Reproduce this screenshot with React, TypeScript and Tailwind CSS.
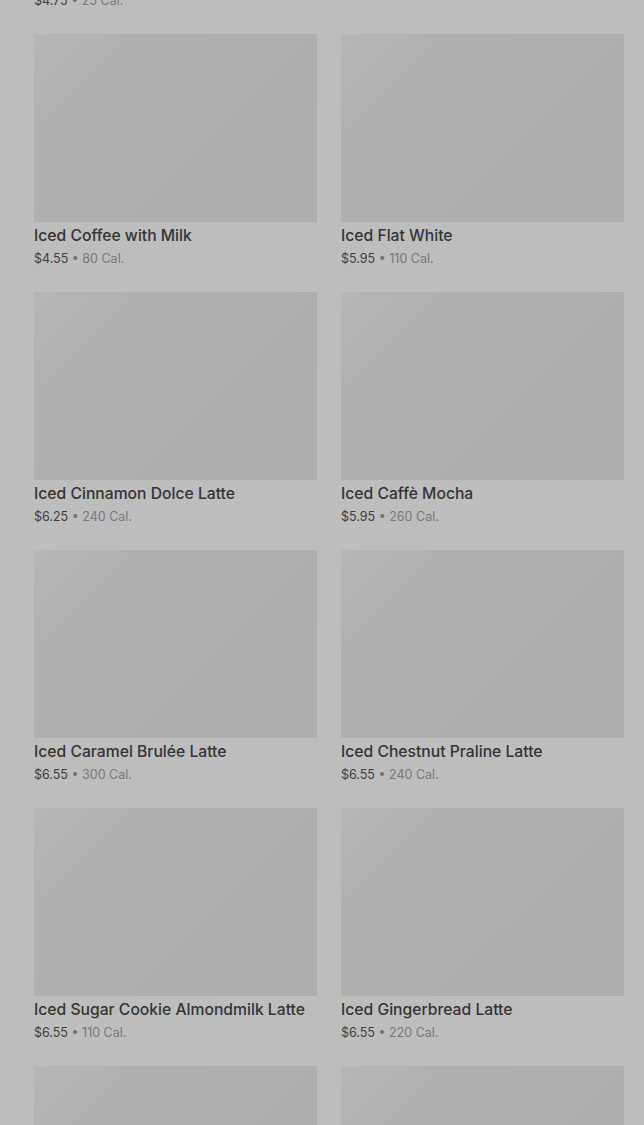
const items: { name: string; price: string; cal: string }[][] = [
  [
    { name: "Iced Coffee", price: "$4.75", cal: "25 Cal." },
    { name: "", price: "", cal: "" },
  ],
  [
    { name: "Iced Coffee with Milk", price: "$4.55", cal: "80 Cal." },
    { name: "Iced Flat White", price: "$5.95", cal: "110 Cal." },
  ],
  [
    { name: "Iced Cinnamon Dolce Latte", price: "$6.25", cal: "240 Cal." },
    { name: "Iced Caffè Mocha", price: "$5.95", cal: "260 Cal." },
  ],
  [
    { name: "Iced Caramel Brulée Latte", price: "$6.55", cal: "300 Cal." },
    { name: "Iced Chestnut Praline Latte", price: "$6.55", cal: "240 Cal." },
  ],
  [
    { name: "Iced Sugar Cookie Almondmilk Latte", price: "$6.55", cal: "110 Cal." },
    { name: "Iced Gingerbread Latte", price: "$6.55", cal: "220 Cal." },
  ],
  [
    { name: "Iced Pumpkin Spice Latte", price: "$6.55", cal: "310 Cal." },
    { name: "Iced White Chocolate Mocha", price: "$6.55", cal: "420 Cal." },
  ],
];

function Card({ item, first }: { item: { name: string; price: string; cal: string }; first: boolean }) {
  if (!item.name) return <div />;
  return (
    <div className="flex flex-col">
      <div
        className={`h-[188px] w-full bg-[linear-gradient(135deg,#b6b6b6_0%,#b0b0b0_25%,#afafaf_60%,#adadad_100%)] ${first ? "invisible" : ""}`}
      />
      <div className="mt-[3px] text-[15.7px] leading-[22px] font-medium text-[#343434]">
        {item.name}
      </div>
      <div className="mt-[2px] text-[12.5px] leading-[20px] whitespace-nowrap">
        <span className="text-[#3d3d3d]">{item.price}</span>
        <span className="text-[#707070]"> • </span>
        <span className="text-[#777777]">{item.cal}</span>
      </div>
    </div>
  );
}

export default function App() {
  return (
    <div
      className="h-[1125px] w-[644px] overflow-hidden bg-[#bdbdbd]"
      style={{ fontFamily: "Inter, 'Noto Sans', sans-serif" }}
    >
      <div className="mt-[-224px] pl-[34px] pr-[20px] grid grid-cols-2 gap-x-[24px] gap-y-[23px]">
        {items.map((row, i) =>
          row.map((it, j) => <Card key={`${i}-${j}`} item={it} first={i === 0} />)
        )}
      </div>
    </div>
  );
}
